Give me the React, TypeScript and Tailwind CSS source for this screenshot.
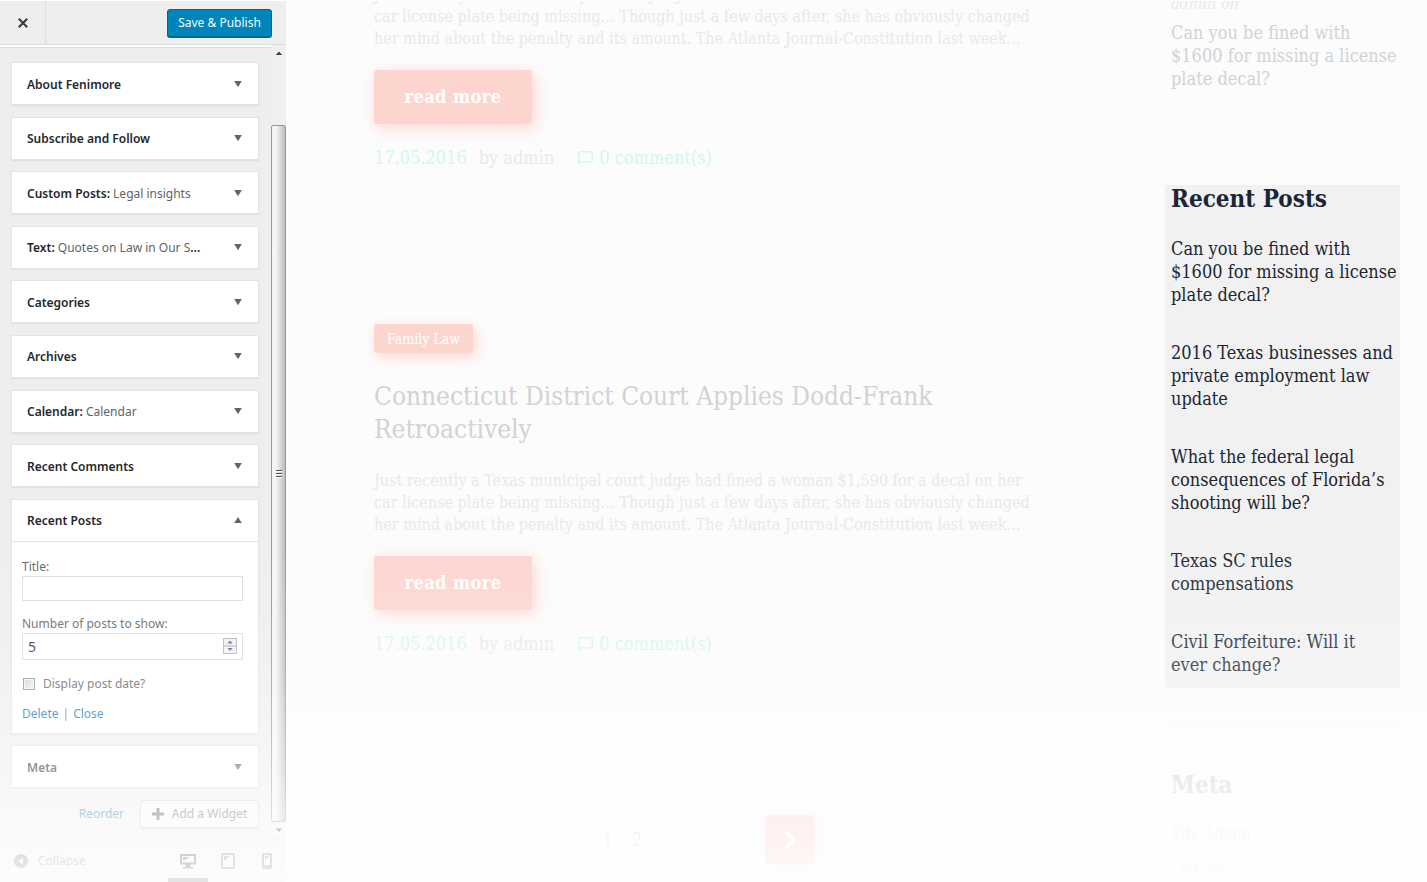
import { ReactNode } from "react";

const serif = "font-['DejaVu_Serif_Condensed','DejaVu_Serif',serif]";

function Arrow({ up = false }: { up?: boolean }) {
  return (
    <svg className="h-2 w-2 shrink-0 text-[#606468]" viewBox="0 0 8 8" fill="currentColor" aria-hidden="true">
      <path d={up ? "M4 0 7.800 6H.2z" : "M.2 0h7.600L4 6.200z"} />
    </svg>
  );
}

function WidgetHead({ name, detail, more, open }: { name: string; detail?: string; more?: boolean; open?: boolean }) {
  return (
    <button type="button" aria-expanded={!!open} className="flex h-[41px] w-full items-center justify-between pt-0.5 pr-4 pl-[15px] text-left">
      <span className="font-semibold whitespace-nowrap text-[#23282d]">
        {name}
        {detail && (
          <>
            : <span className="font-normal text-[#606468]">{detail}</span>
          </>
        )}
        {more && "..."}
      </span>
      <Arrow up={open} />
    </button>
  );
}

function Card({ children }: { children: ReactNode }) {
  return <li className="border border-[#e4e4e4] bg-white shadow-[0_1px_1px_rgba(0,0,0,0.05)]">{children}</li>;
}

const widgets: { name: string; detail?: string; more?: boolean }[] = [
  { name: "About Fenimore" },
  { name: "Subscribe and Follow" },
  { name: "Custom Posts", detail: "Legal insights" },
  { name: "Text", detail: "Quotes on Law in Our S", more: true },
  { name: "Categories" },
  { name: "Archives" },
  { name: "Calendar", detail: "Calendar" },
  { name: "Recent Comments" },
];

function RecentPostsForm() {
  return (
    <form className="border-t border-[#e2e2e2] px-2.5 pt-3.5 pb-[9px] text-[#606468]">
      <label htmlFor="title" className="block h-5 leading-[22px]">
        Title:
      </label>
      <input id="title" type="text" className="block h-[25px] w-[221px] border border-[#ddd] bg-white px-1" />
      <label htmlFor="count" className="mt-3 block h-5 leading-[22px]">
        Number of posts to show:
      </label>
      <div className="relative w-[221px]">
        <input
          id="count"
          type="text"
          inputMode="numeric"
          defaultValue="5"
          className="block h-[27px] w-full border border-[#ddd] bg-white px-[5px] text-sm text-[#32373c]"
        />
        <svg className="absolute top-[5px] right-[6px] h-4 w-3.5" viewBox="0 0 14 16" aria-hidden="true">
          <rect x=".5" y=".5" width="13" height="15" fill="#f1f1f1" stroke="#b5b5b5" />
          <path d="M1 8h12" stroke="#a5a5a5" />
          <path d="M7 2.500 9.600 5.500H4.400zM7 13 9.600 10H4.400z" fill="#5466ad" />
        </svg>
      </div>
      <div className="mt-3.5 flex h-5 items-center gap-2">
        <input
          id="dates"
          type="checkbox"
          className="ml-px h-3 w-3 appearance-none border border-[#8e8f8f] bg-linear-to-br from-[#c9ccd0] to-[#f6f6f6] shadow-[inset_0_0_0_1px_#f4f4f4]"
        />
        <label htmlFor="dates">Display post date?</label>
      </div>
      <div className="mt-2.5 flex h-5 items-center gap-1">
        <a href="#delete" className="text-[#0073aa]">Delete</a>
        <span className="text-[#a0528a]">|</span>
        <a href="#close" className="text-[#0073aa]">Close</a>
      </div>
    </form>
  );
}

function Scrollbar() {
  return (
    <div className="flex w-[15px] shrink-0 flex-col items-center bg-[#f0f0f0]" aria-hidden="true">
      <svg className="mt-1 h-2 w-2" viewBox="0 0 8 8"><path d="M4 2.500 7.200 6H.8z" fill="#404040" /></svg>
      <div className="mt-[68px] flex w-full flex-1 items-center justify-center rounded-xs border border-[#979797] bg-linear-to-r from-[#f5f5f5] from-30% to-[#bcbcc0]">
        <svg className="h-2 w-1.5" viewBox="0 0 6 8"><path d="M0 .5h6M0 3.500h6M0 6.500h6" stroke="#505050" /><path d="M0 1.500h6M0 4.500h6M0 7.500h6" stroke="#fff" /></svg>
      </div>
      <svg className="my-1 h-2 w-2" viewBox="0 0 8 8"><path d="M4 6 7.200 2.500H.8z" fill="#404040" /></svg>
    </div>
  );
}

function Customizer() {
  return (
    <section className="flex w-[286px] shrink-0 flex-col border-t border-white bg-[#eee] font-['Noto_Sans',sans-serif] text-xs">
      <header className="flex h-11 shrink-0 items-stretch justify-between border-b border-[#ddd]">
        <button type="button" aria-label="Close customizer" className="flex w-[46px] items-center justify-center border-r border-[#ddd]">
          <svg className="h-2.5 w-2.5" viewBox="0 0 10 10" stroke="#3c3c3c" strokeWidth="2.100"><path d="m.8.8 8.400 8.400M9.200.8.8 9.200" /></svg>
        </button>
        <button type="button" className="mr-3.5 h-7 w-[105px] self-center rounded-[3px] border border-[#006799] bg-[#0085ba] text-[#f2fbff] shadow-[0_1px_0_#006799]">
          Save &amp; Publish
        </button>
      </header>
      <div className="flex min-h-0 flex-1">
        <div className="flex flex-1 flex-col">
          <div className="h-[3px] shrink-0 border-b border-[#ddd] bg-white" />
          <ul className="flex flex-1 flex-col justify-between pt-3.5 pr-3 pb-2.5 pl-[11px]">
            {widgets.map((w) => (
              <Card key={w.name}>
                <WidgetHead {...w} />
              </Card>
            ))}
            <Card>
              <WidgetHead name="Recent Posts" open />
              <RecentPostsForm />
            </Card>
            <Card>
              <WidgetHead name="Meta" />
            </Card>
            <li className="flex items-center justify-end gap-4">
              <button type="button" className="text-[#0073aa]">Reorder</button>
              <button type="button" className="flex h-7 w-[119px] items-center justify-center gap-2 rounded-[3px] border border-[#ccc] bg-[#f7f7f7] text-[#555] shadow-[0_1px_0_#ccc]">
                <svg className="h-3 w-3" viewBox="0 0 12 12" stroke="#444" strokeWidth="3"><path d="M6 0v12M0 6h12" /></svg>
                Add a Widget
              </button>
            </li>
          </ul>
        </div>
        <Scrollbar />
      </div>
      <footer className="flex h-11 shrink-0 items-stretch justify-between border-t border-[#ddd] pl-3.5 text-[#888]">
        <button type="button" className="flex items-center gap-2.5">
          <svg className="h-3.5 w-3.5" viewBox="0 0 14 14"><circle cx="7" cy="7" r="7" fill="#777" /><path d="M9 3.400v7.200L3.800 7z" fill="#eee" /></svg>
          Collapse
        </button>
        <div className="flex items-stretch">
          <button type="button" aria-label="Desktop preview" className="flex w-10 items-center justify-center border-b-4 border-[#555] pt-1">
            <svg className="h-4 w-4" viewBox="0 0 16 16" fill="#333"><path fillRule="evenodd" d="M0 1h16v10.500h-5.500V14H13v1.500H3V14h2.500v-2.500H0zM2 3v6.500h12V3z" /><path d="M3 4h7L3 7.500z" /></svg>
          </button>
          <button type="button" aria-label="Tablet preview" className="flex w-10 items-center justify-center">
            <svg className="h-4 w-3.5" viewBox="0 0 14 16" fill="#777"><path fillRule="evenodd" d="M1 0h12l1 1v14l-1 1H1l-1-1V1zM2 2v12h10V2z" /><path d="M3 3h6L3 8z" /></svg>
          </button>
          <button type="button" aria-label="Mobile preview" className="flex w-[38px] items-center justify-center">
            <svg className="h-4 w-2.5" viewBox="0 0 10 16" fill="#777"><path fillRule="evenodd" d="M1 0h8l1 1v14l-1 1H1l-1-1V1zM2 2v10h6V2z" /><path d="M3 3h4L3 7z" /></svg>
          </button>
        </div>
      </footer>
    </section>
  );
}

function Excerpt() {
  return (
    <p className="text-base leading-[22px] whitespace-nowrap text-[#e9e9e9]">
      Just recently a Texas municipal court judge had fined a woman $1,590 for a decal on her
      <br />
      car license plate being missing… Though just a few days after, she has obviously changed
      <br />
      her mind about the penalty and its amount. The Atlanta Journal-Constitution last week…
    </p>
  );
}

function PostFooter() {
  return (
    <>
      <a href="#post" className="mt-5 flex h-[54px] w-[158px] items-center justify-center rounded-[3px] bg-[#fdd5cf] text-lg font-bold tracking-wide text-white shadow-[3px_4px_16px_#fdd5cf]">
        read more
      </a>
      <div className="mt-[22px] flex h-6 items-center text-lg text-[#e9e9e9]">
        <a href="#date" className="mr-3 text-[#d2f6f2]">17.05.2016</a>
        <span className="mr-6">by admin</span>
        <a href="#comments" className="flex items-center gap-1.5 text-[#d2f6f2]">
          <svg className="h-3.5 w-[15px]" viewBox="0 0 15 14" fill="none" stroke="currentColor" strokeWidth="1.500"><path d="M.8 12.800V1.500q0-.7.700-.7h12q.7 0 .7.700v8.500q0 .7-.7.700H3z" /></svg>
          0 comment(s)
        </a>
      </div>
    </>
  );
}

const recent = [
  ["Can you be fined with", "$1600 for missing a license", "plate decal?"],
  ["2016 Texas businesses and", "private employment law", "update"],
  ["What the federal legal", "consequences of Florida’s", "shooting will be?"],
  ["Texas SC rules", "compensations"],
  ["Civil Forfeiture: Will it", "ever change?"],
];

function PostLink({ lines }: { lines: string[] }) {
  return (
    <a href="#post" className="block text-lg leading-[23px] whitespace-nowrap">
      {lines.map((l) => (
        <span key={l} className="block">{l}</span>
      ))}
    </a>
  );
}

function Preview() {
  return (
    <div className={`flex min-w-0 flex-1 items-start justify-between gap-10 overflow-hidden border-t border-white bg-[#fcfcfc] pr-[27px] pl-[88px] ${serif}`}>
      <main className="-mt-[17px] max-w-[676px] min-w-0 flex-1">
        <article>
          <Excerpt />
          <PostFooter />
        </article>
        <article className="mt-[154px]">
          <a href="#family-law" className="flex h-[29px] w-[99px] items-center justify-center rounded-[3px] bg-[#fdd5cf] text-sm text-white shadow-[3px_4px_14px_#fdd5cf]">
            Family Law
          </a>
          <h2 className="mt-[27px] mb-6 text-[26px] leading-[33px] whitespace-nowrap text-[#d0d3d6]">
            Connecticut District Court Applies Dodd-Frank
            <br />
            Retroactively
          </h2>
          <Excerpt />
          <PostFooter />
        </article>
        <nav aria-label="Pages" className="mt-[159px] flex items-center pl-[229px] text-lg">
          <a href="#1" className="w-[29px] text-[#fdd5cf]">1</a>
          <a href="#2" className="text-[#d0d3d6]">2</a>
          <a href="#next" aria-label="Next page" className="ml-[123px] flex h-[49px] w-[49px] items-center justify-center rounded-[3px] bg-[#fdd0ca] shadow-[3px_4px_16px_#fde3df]">
            <svg className="h-5 w-3" viewBox="0 0 12 20" fill="none" stroke="#fff" strokeWidth="3"><path d="m1.500 1.500 8 8.500-8 8.500" /></svg>
          </a>
        </nav>
      </main>
      <aside className="w-[235px] shrink-0 text-[#d0d3d6]">
        <div className="-mt-2 pl-1.5">
          <p className="h-7 text-base leading-[22px] text-[#e9e9e9] italic">admin on</p>
          <PostLink lines={recent[0]} />
          <hr className="mt-12 border-[#f8f8f8]" />
        </div>
        <section className="mt-[46px] bg-[#f1f1f1] pb-3 pl-1.5 text-[#1a2733]">
          <h3 className="text-2xl leading-7 font-bold">Recent Posts</h3>
          <ul className="mt-6 flex flex-col gap-[35px]">
            {recent.map((lines) => (
              <li key={lines[0]}><PostLink lines={lines} /></li>
            ))}
          </ul>
        </section>
        <section className="pl-1.5">
          <hr className="mt-[35px] border-[#f5f5f5]" />
          <h3 className="mt-[47px] text-2xl leading-7 font-bold">Meta</h3>
          <ul className="mt-6 flex flex-col gap-3 text-base leading-[22px] text-[#fddfda] italic">
            <li><a href="#admin">Site Admin</a></li>
            <li><a href="#logout">Log out</a></li>
          </ul>
        </section>
      </aside>
    </div>
  );
}

export default function App() {
  return (
    <div className="relative flex h-screen overflow-hidden">
      <Customizer />
      <Preview />
      <div className="pointer-events-none absolute inset-0 bg-[linear-gradient(to_bottom,transparent_60%,rgba(255,255,255,0.22)_76%,rgba(255,255,255,0.5)_87%,rgba(255,255,255,0.7)_93%,rgba(255,255,255,0.8)_98%,rgba(255,255,255,0.84)_100%)]" />
    </div>
  );
}
